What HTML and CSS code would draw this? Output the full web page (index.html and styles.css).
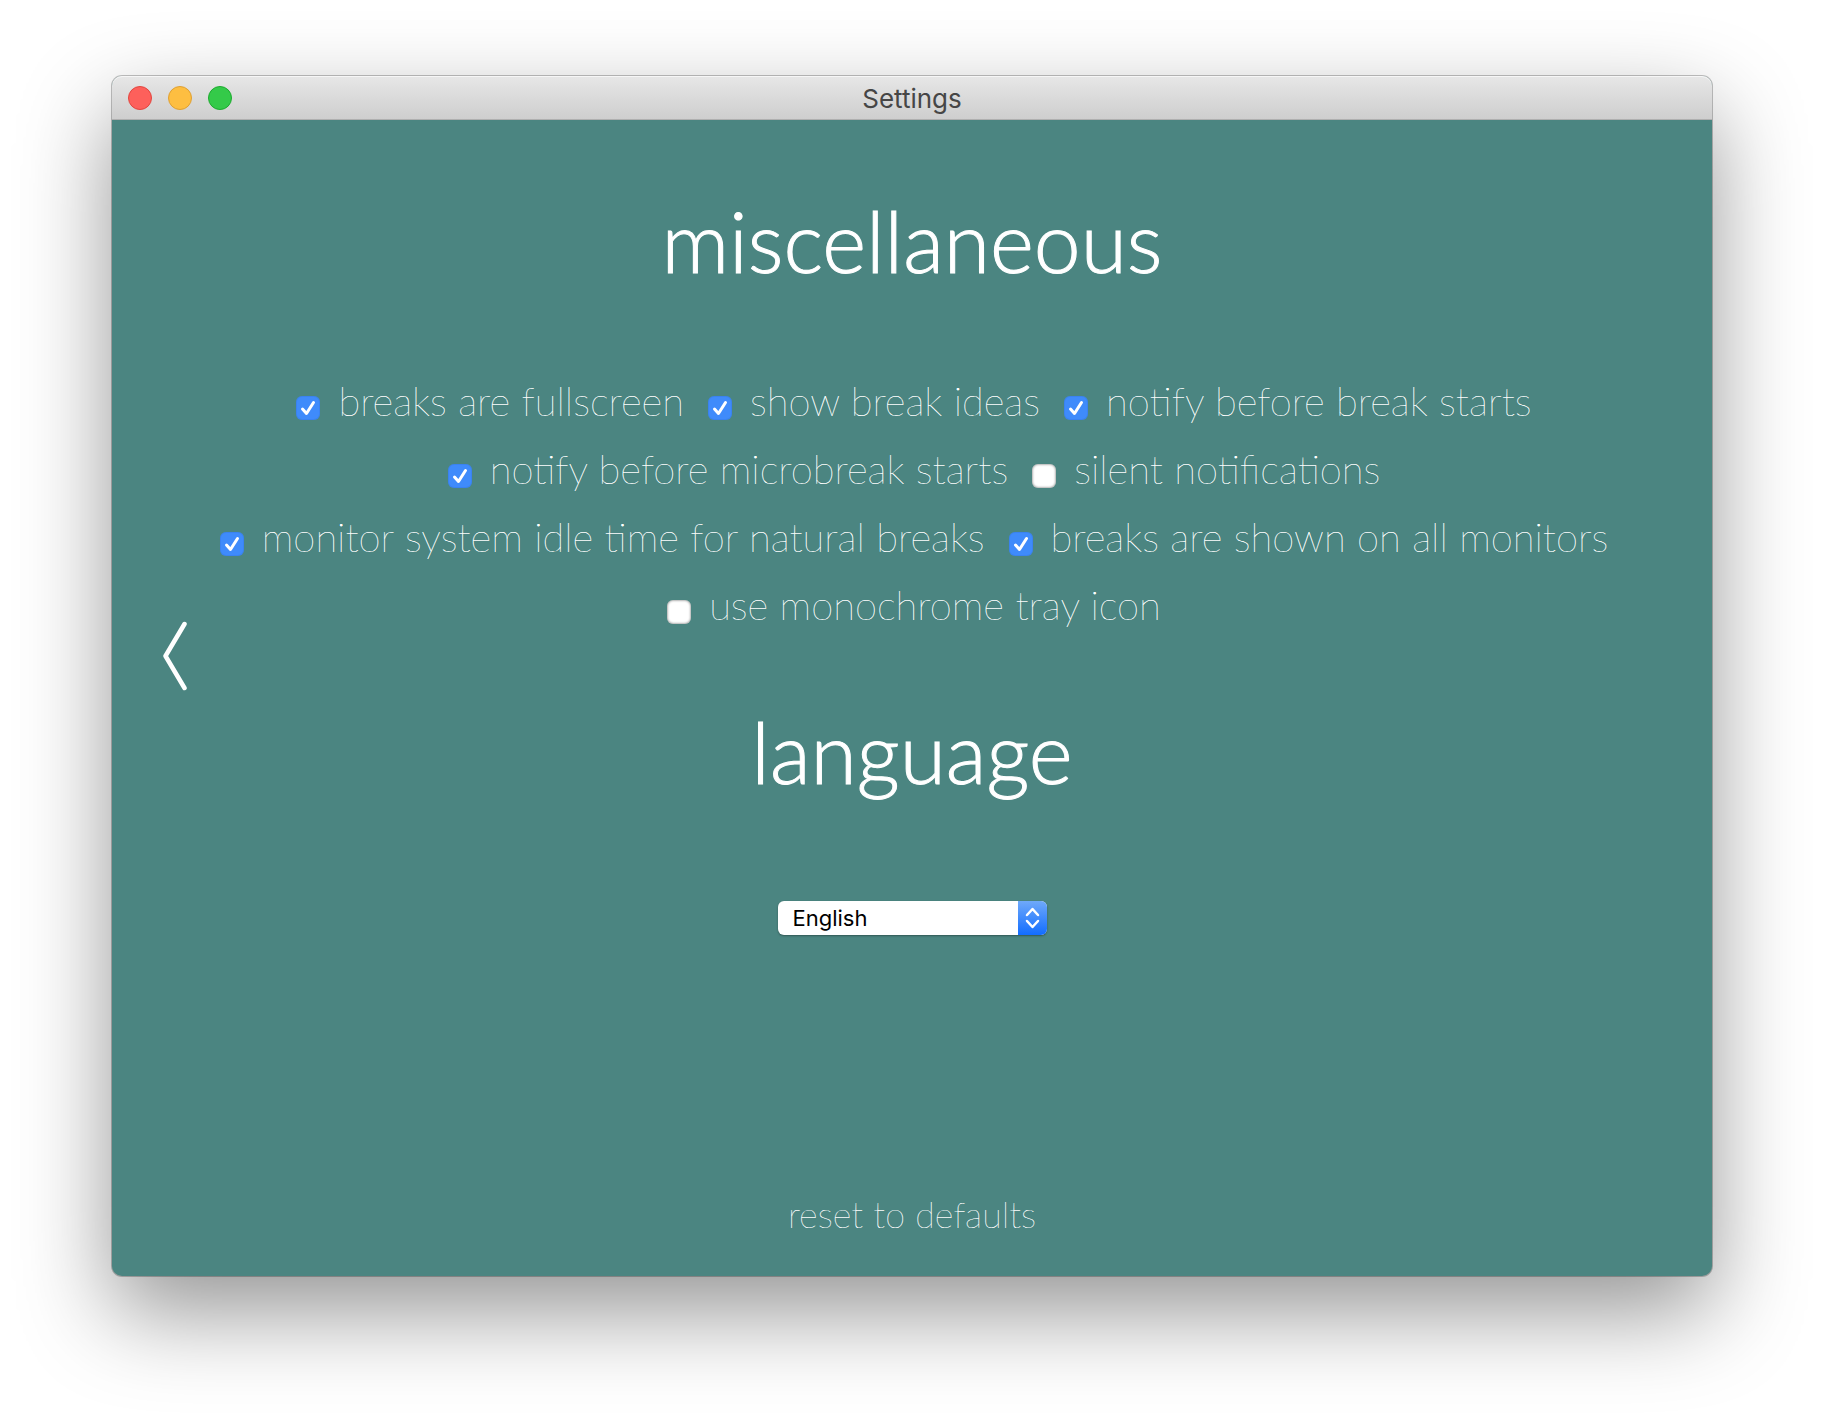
FILE: index.html
```html
<!DOCTYPE html>
<html lang="en">
<head>
  <meta charset="utf-8">
  <title>Settings</title>
  <link rel="stylesheet" href="styles.css">
</head>
<body>
  <div class="window">
    <header class="titlebar">
      <div class="lights">
        <button class="light light-close" type="button" aria-label="Close"></button>
        <button class="light light-minimize" type="button" aria-label="Minimize"></button>
        <button class="light light-zoom" type="button" aria-label="Zoom"></button>
      </div>
      <span class="title">Settings</span>
    </header>

    <main class="content">
      <button class="back" type="button" aria-label="Back">
        <svg width="24" height="72" viewBox="0 0 24 72" fill="none" stroke="#fff" stroke-width="4.500" stroke-linecap="round" stroke-linejoin="round">
          <path d="M21.500 4 2.500 36 21.500 68"/>
        </svg>
      </button>

      <div class="sections">
        <section class="section">
          <h1 class="heading">miscellaneous</h1>
          <div class="options">
            <label class="option"><input class="check" type="checkbox" checked>breaks are fullscreen</label>
            <label class="option"><input class="check" type="checkbox" checked>show break ideas</label>
            <label class="option"><input class="check" type="checkbox" checked>notify before break starts</label>
            <label class="option"><input class="check" type="checkbox" checked>notify before microbreak starts</label>
            <label class="option"><input class="check" type="checkbox">silent notifications</label>
            <label class="option"><input class="check" type="checkbox" checked>monitor system idle time for natural breaks</label>
            <label class="option"><input class="check" type="checkbox" checked>breaks are shown on all monitors</label>
            <label class="option"><input class="check" type="checkbox">use monochrome tray icon</label>
          </div>
        </section>

        <section class="section section-language">
          <h1 class="heading" id="language-heading">language</h1>
          <div class="picker">
            <select class="select" aria-labelledby="language-heading">
              <option>English</option>
            </select>
            <svg class="picker-arrows" width="29" height="34" viewBox="0 0 29 34" fill="none" stroke="#fff" stroke-width="2.500" stroke-linecap="round" stroke-linejoin="round">
              <path d="M9 14 14.500 8 20 14M9 20 14.500 26 20 20"/>
            </svg>
          </div>
        </section>
      </div>
    </main>

    <footer class="footer">
      <a class="reset" href="#">reset to defaults</a>
    </footer>
  </div>
</body>
</html>
```
FILE: styles.css
```css
* {
  box-sizing: border-box;
}

body {
  display: flex;
  min-height: 100vh;
  margin: 0;
  padding: 76px 112px 148px;
  background: #fff;
  color: #fff;
  font-family: Lato, "Open Sans", sans-serif;
}

.window {
  display: flex;
  flex: 1;
  flex-direction: column;
  border-radius: 10px;
  background: #4b8581;
  box-shadow: 0 0 0 1px rgba(0, 0, 0, 0.24), 0 36px 92px 0 rgba(0, 0, 0, 0.42);
}

/* Title bar */

.titlebar {
  display: grid;
  grid-template-columns: 1fr auto 1fr;
  align-items: center;
  height: 44px;
  padding: 0 16px;
  border-bottom: 1px solid #afafaf;
  border-radius: 10px 10px 0 0;
  background: linear-gradient(#e7e7e7, #cecece);
  box-shadow: inset 0 1px #f6f6f6;
}

.lights {
  display: flex;
  gap: 16px;
}

.light {
  width: 24px;
  height: 24px;
  padding: 0;
  border: 1px solid;
  border-radius: 50%;
}

.light-close {
  border-color: #e2463f;
  background: #fd605b;
}

.light-minimize {
  border-color: #dfa033;
  background: #fdbe41;
}

.light-zoom {
  border-color: #1dab2f;
  background: #34ca49;
}

.title {
  padding-top: 2px;
  color: #464646;
  font-family: Inter, sans-serif;
  font-size: 26px;
  line-height: 32px;
}

/* Settings */

.content {
  display: grid;
  flex: 1;
  grid-template-columns: 75px 1fr 75px;
}

.back {
  align-self: center;
  justify-self: end;
  height: 72px;
  padding: 0;
  border: 0;
  background: none;
}

.back svg {
  display: block;
}

.sections {
  padding-top: 68px;
}

.section {
  display: flex;
  flex-direction: column;
  align-items: center;
}

.section-language {
  margin-top: 60px;
}

.heading {
  margin: 0;
  font-size: 84px;
  font-weight: 300;
  line-height: 106px;
  -webkit-text-stroke: 1px #fff;
}

.options {
  display: flex;
  flex-wrap: wrap;
  justify-content: center;
  column-gap: 24px;
  margin-top: 73px;
  padding-left: 4px;
}

.option {
  display: flex;
  align-items: center;
  gap: 18px;
  font-size: 40px;
  font-weight: 100;
  line-height: 68px;
  text-shadow: 0 0 #fff;
}

.check {
  width: 24px;
  height: 24px;
  margin: 14px 0 0;
  border-radius: 6px;
  appearance: none;
  background: #fff;
  box-shadow: inset 0 0 2px 1px rgba(0, 0, 0, 0.3);
}

.check:checked {
  background: #3f8bfb url("data:image/svg+xml,%3Csvg xmlns='http://www.w3.org/2000/svg' viewBox='0 0 24 24' fill='none' stroke='%23fff' stroke-width='3' stroke-linecap='round' stroke-linejoin='round'%3E%3Cpath d='M6.500 13 10.500 17.500 17.500 6.500'/%3E%3C/svg%3E");
  box-shadow: inset 0 0 0 1px #3a82f0;
}

.picker {
  position: relative;
  width: 269px;
  margin-top: 96px;
}

.select {
  display: block;
  width: 100%;
  height: 34px;
  padding: 0 40px 0 15px;
  border: 0;
  border-radius: 6px;
  appearance: none;
  background: #fff;
  box-shadow: 0 1px 2px rgba(0, 0, 0, 0.35);
  color: #000;
  font-family: Inter, sans-serif;
  font-size: 22px;
}

.picker-arrows {
  position: absolute;
  top: 0;
  right: 0;
  border-radius: 0 6px 6px 0;
  background: linear-gradient(#6fa9fa, #126dff);
  pointer-events: none;
}

/* Footer */

.footer {
  display: flex;
  justify-content: center;
  height: 84px;
}

.reset {
  color: #fff;
  font-size: 36px;
  font-weight: 100;
  line-height: 44px;
  text-decoration: none;
  text-shadow: 0 0 #fff;
}
```
